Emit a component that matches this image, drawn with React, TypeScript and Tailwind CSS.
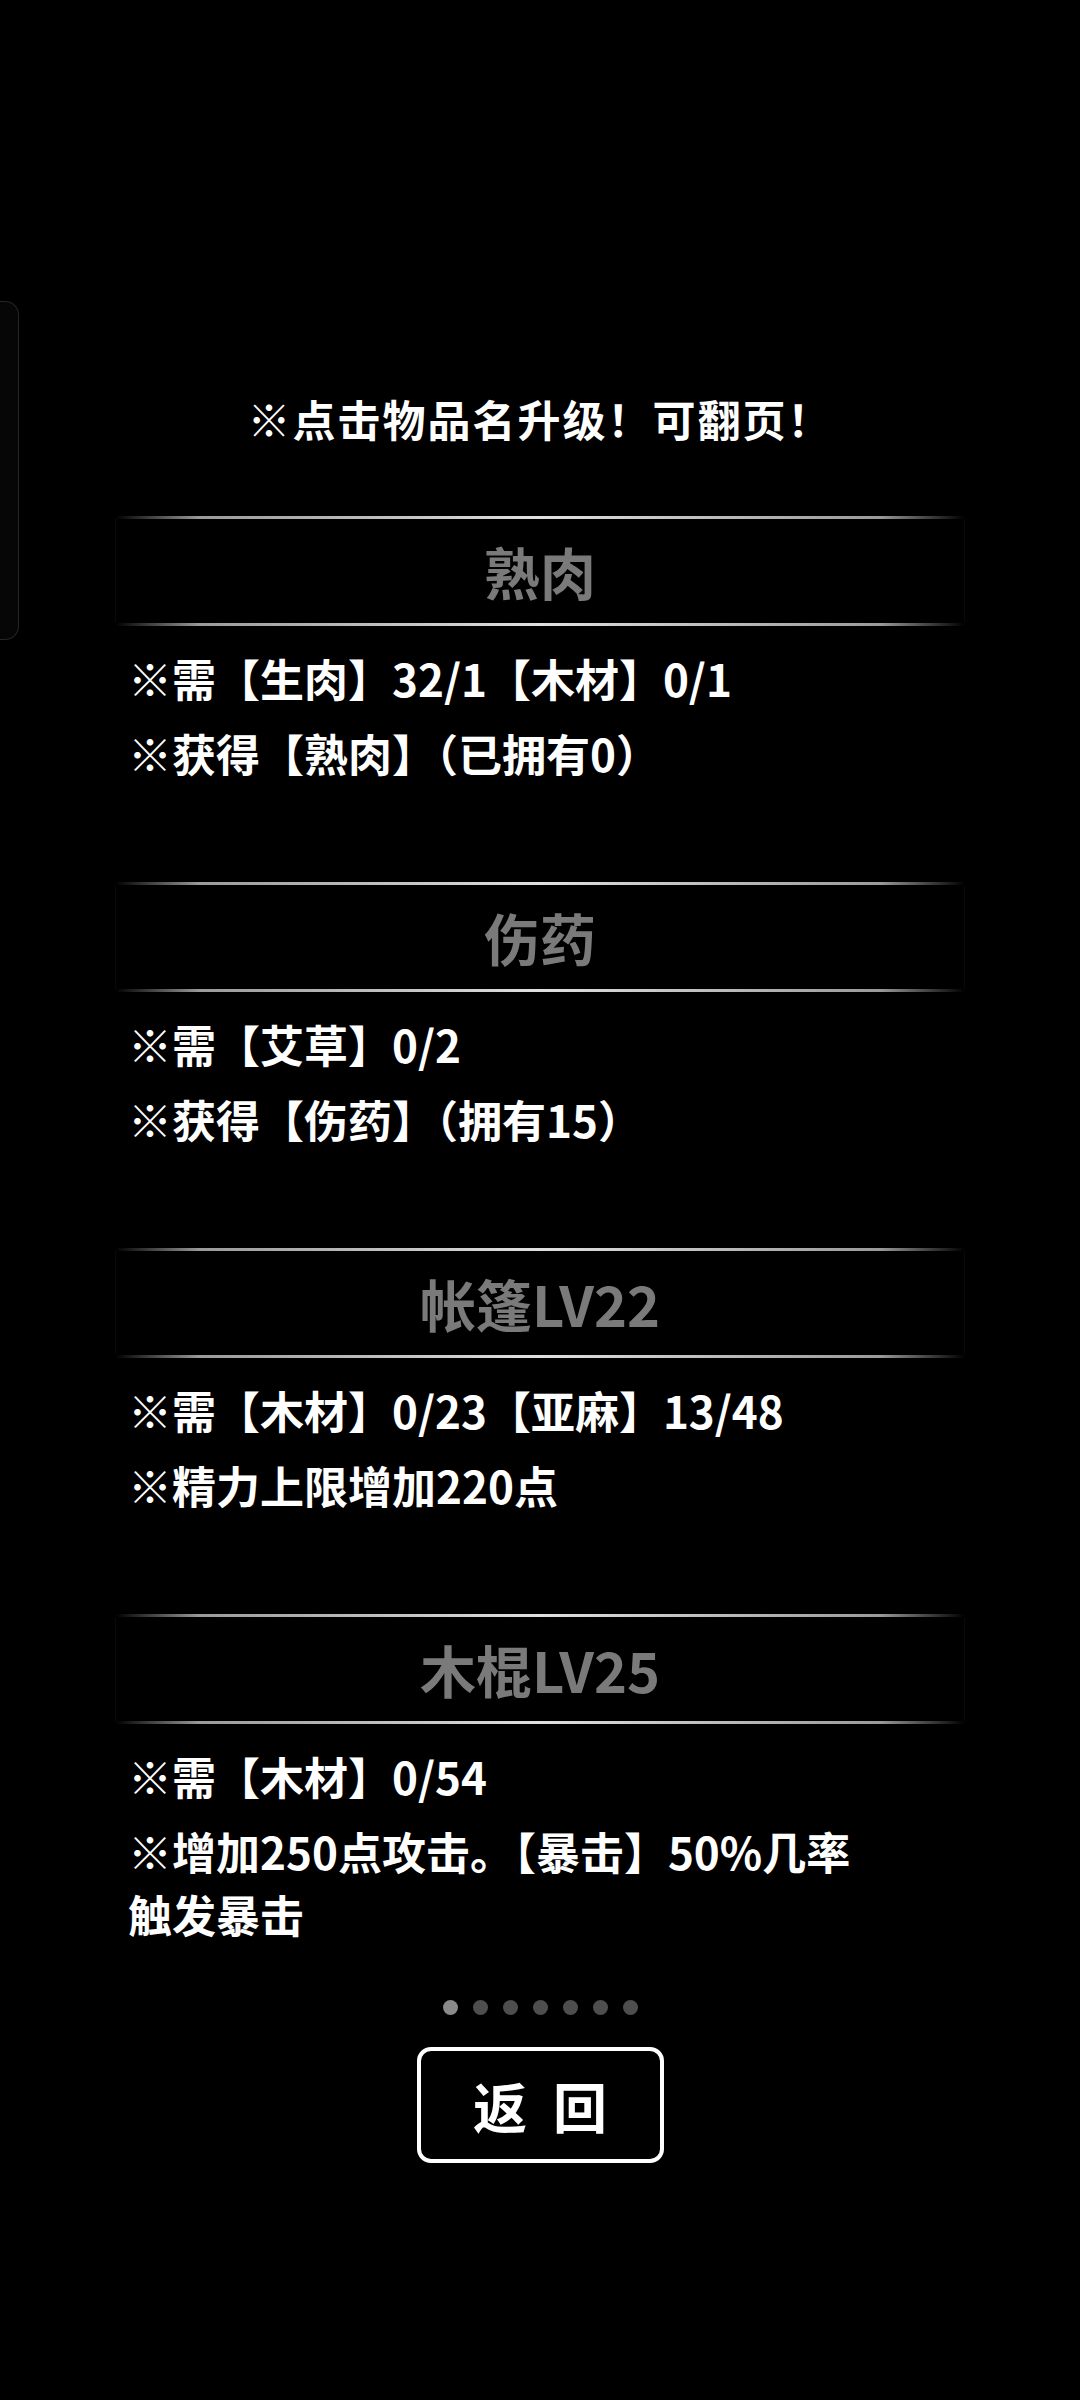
import React from 'react'

type Item = {
  name: string
  lines: string[]
}

const items: Item[] = [
  { name: '熟肉', lines: ['※需【生肉】32/1【木材】0/1', '※获得【熟肉】（已拥有0）'] },
  { name: '伤药', lines: ['※需【艾草】0/2', '※获得【伤药】（拥有15）'] },
  { name: '帐篷LV22', lines: ['※需【木材】0/23【亚麻】13/48', '※精力上限增加220点'] },
  { name: '木棍LV25', lines: ['※需【木材】0/54', '※增加250点攻击。【暴击】50%几率触发暴击'] },
]

function Divider() {
  return (
    <div className="h-[3px] w-full bg-[linear-gradient(90deg,transparent,#9a9a9a_10%,#e0e0e0_50%,#9a9a9a_90%,transparent)]" />
  )
}

function ItemBlock({ item }: { item: Item }) {
  return (
    <div className="flex flex-col">
      <Divider />
      <div className="flex h-[104px] items-center justify-center border-x border-[#090909]">
        <span className="text-[56px] font-bold leading-none text-[#7a7a7a]">{item.name}</span>
      </div>
      <Divider />
      <div className="mt-[21px] flex w-[760px] flex-col gap-[12px] pl-[13px]">
        {item.lines.map((l) => (
          <p key={l} className="text-[44px] font-bold leading-[63px] text-white">
            {l}
          </p>
        ))}
      </div>
    </div>
  )
}

export default function App() {
  return (
    <div className="relative h-[2400px] w-[1080px] overflow-hidden bg-black font-['Noto_Sans_CJK_SC',sans-serif]">
      {/* edge of a floating panel on the left */}
      <div className="absolute left-0 top-[301px] h-[339px] w-[19px] rounded-r-[14px] border border-l-0 border-[#262626] bg-[#060606]" />

      <div className="flex flex-col items-center pt-[390px]">
        <div className="h-[56px] text-[43px] font-bold leading-[56px] tracking-[2px] text-white">※点击物品名升级！可翻页！</div>

        <div className="mt-[70px] flex w-[850px] flex-col gap-[97px]">
          {items.map((it) => (
            <ItemBlock key={it.name} item={it} />
          ))}
        </div>

        <div className="mt-[54px] flex gap-[15px]">
          {[0, 1, 2, 3, 4, 5, 6].map((i) => (
            <span
              key={i}
              className={i === 0 ? 'h-[15px] w-[15px] rounded-full bg-[#8a8a8a]' : 'h-[15px] w-[15px] rounded-full bg-[#4e4e4e]'}
            />
          ))}
        </div>

        <button className="mt-[32px] flex h-[116px] w-[247px] items-center justify-center gap-[26px] rounded-[14px] border-[4px] border-white bg-black text-[54px] font-bold text-white">
          <span>返</span>
          <span>回</span>
        </button>
      </div>
    </div>
  )
}
